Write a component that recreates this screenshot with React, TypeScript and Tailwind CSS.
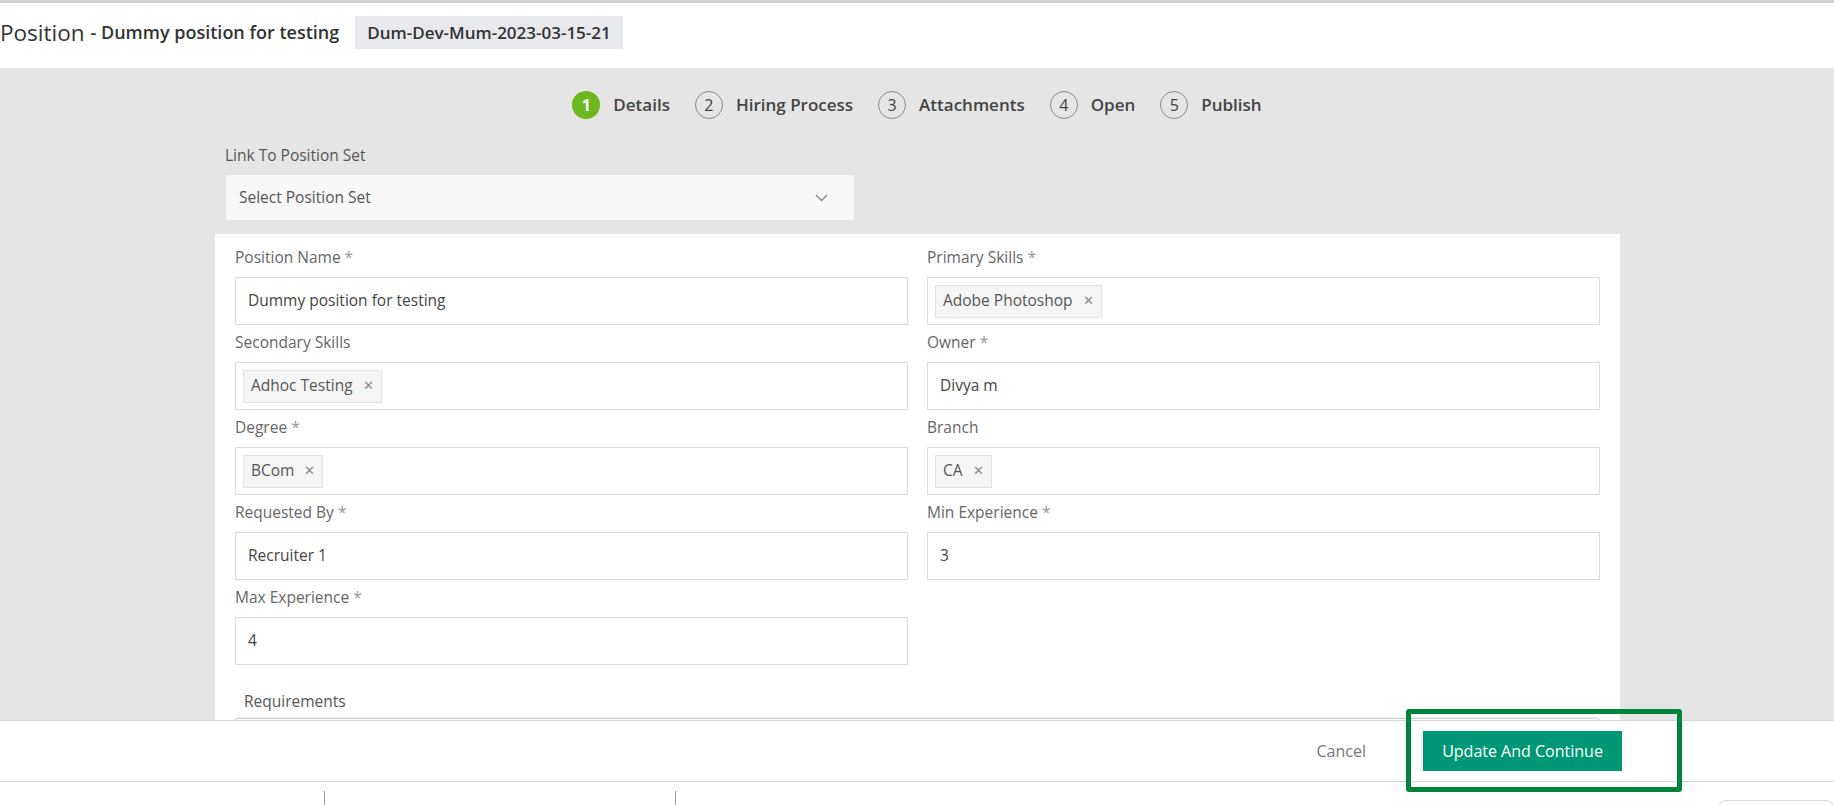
import React from 'react';

const steps = ['Details', 'Hiring Process', 'Attachments', 'Open', 'Publish'];

const Label: React.FC<{ text: string; required?: boolean }> = ({ text, required }) => (
  <div className="text-[15.5px] leading-[22px] text-[#666] mb-[9px]">
    {text}
    {required && <span className="text-[#999]"> *</span>}
  </div>
);

const TextField: React.FC<{ label: string; value: string; required?: boolean }> = ({ label, value, required }) => (
  <div>
    <Label text={label} required={required} />
    <div className="h-[48px] border border-[#dcdcdc] bg-white flex items-center pl-[12px] text-[15.5px] text-[#444]">
      {value}
    </div>
  </div>
);

const ChipField: React.FC<{ label: string; chips: string[]; required?: boolean }> = ({ label, chips, required }) => (
  <div>
    <Label text={label} required={required} />
    <div className="h-[48px] border border-[#dcdcdc] bg-white flex items-center gap-2 pl-[7px]">
      {chips.map((c) => (
        <span
          key={c}
          className="h-[33px] flex items-center px-[7px] bg-[#f5f5f5] border border-[#e2e2e2] text-[15.5px] text-[#555]"
        >
          {c}
          <span className="ml-[10px] text-[13px] text-[#888]">✕</span>
        </span>
      ))}
    </div>
  </div>
);

export default function App() {
  return (
    <div
      className="relative w-full h-[805px] overflow-hidden flex flex-col bg-white"
      style={{ fontFamily: '"Open Sans", "Noto Sans", sans-serif' }}
    >
      {/* header */}
      <div className="h-[68px] shrink-0 border-t-[3px] border-[#d2d2d2] pb-[6px] flex items-center bg-white">
        <span className="text-[22.5px] text-[#333]">Position</span>
        <span className="ml-[6px] text-[18px] font-semibold text-[#333]">- Dummy position for testing</span>
        <span className="ml-[16px] h-[33px] px-[12px] flex items-center bg-[#e8e9ed] text-[17px] font-semibold text-[#333]">
          Dum-Dev-Mum-2023-03-15-21
        </span>
      </div>

      {/* gray body */}
      <div className="flex-1 min-h-0 overflow-hidden bg-[#e5e5e5]">
        <div className="pt-[23px] flex justify-center items-center">
          {steps.map((s, i) => (
            <div key={s} className={`flex items-center ${i > 0 ? 'ml-[25px]' : ''}`}>
              <span
                className={
                  i === 0
                    ? 'w-[28px] h-[28px] rounded-full bg-[#6cb81e] text-white text-[16px] font-bold flex items-center justify-center'
                    : 'w-[28px] h-[28px] rounded-full border border-[#8a8a8a] text-[#444] text-[16px] flex items-center justify-center'
                }
              >
                {i + 1}
              </span>
              <span className="ml-[13px] text-[17px] font-semibold text-[#444]">{s}</span>
            </div>
          ))}
        </div>

        <div className="ml-[225px] mt-[25px]">
          <div className="text-[15.5px] leading-[22px] text-[#555] mb-[8px]">Link To Position Set</div>
          <div className="w-[630px] h-[47px] bg-[#f8f8f8] border border-[#e3e3e3] flex items-center justify-between pl-[13px] pr-[26px] text-[15.5px] text-[#555]">
            Select Position Set
            <svg width="13" height="8" viewBox="0 0 13 8" fill="none">
              <path d="M1 1l5.5 5.5L12 1" stroke="#888" strokeWidth="1.4" />
            </svg>
          </div>
        </div>

        <div className="ml-[215px] mt-[13px] w-[1405px] bg-white px-[20px] pt-[12px] pb-[40px]">
          <div className="grid grid-cols-2 gap-x-[19px] gap-y-[6px]">
            <TextField label="Position Name" value="Dummy position for testing" required />
            <ChipField label="Primary Skills" chips={['Adobe Photoshop']} required />
            <ChipField label="Secondary Skills" chips={['Adhoc Testing']} />
            <TextField label="Owner" value="Divya m" required />
            <ChipField label="Degree" chips={['BCom']} required />
            <ChipField label="Branch" chips={['CA']} />
            <TextField label="Requested By" value="Recruiter 1" required />
            <TextField label="Min Experience" value="3" required />
            <TextField label="Max Experience" value="4" required />
            <div />
          </div>
          <div className="mt-[25px] pl-[9px] text-[15.5px] leading-[22px] text-[#555] mb-[6px]">Requirements</div>
          <div className="h-[120px] border border-[#cfcfcf] rounded-t-[3px] shadow-[0_-1px_2px_rgba(0,0,0,0.08)]" />
        </div>
      </div>

      {/* footer */}
      <div className="h-[62px] shrink-0 bg-white border-t border-b border-[#d8d8d8] flex items-center justify-end pr-[212px]">
        <span className="text-[16px] text-[#777] mr-[57px]">Cancel</span>
        <button className="w-[199px] h-[40px] bg-[#009874] text-white text-[16px]">Update And Continue</button>
      </div>

      {/* bottom strip */}
      <div className="h-[23px] shrink-0 bg-white flex">
        <div className="w-[324px]" />
        <div className="mt-[9px] h-[14px] border-l border-[#999]" />
        <div className="w-[350px]" />
        <div className="mt-[9px] h-[14px] border-l border-[#999]" />
        <div className="ml-auto mt-[18px] w-[116px] h-[10px] border border-b-0 border-[#ddd] rounded-t-[8px]" />
      </div>

      {/* highlight frame */}
      <div className="absolute left-[1406px] top-[709px] w-[276px] h-[83px] border-[5px] border-[#00843d] rounded-[3px] pointer-events-none" />
    </div>
  );
}
